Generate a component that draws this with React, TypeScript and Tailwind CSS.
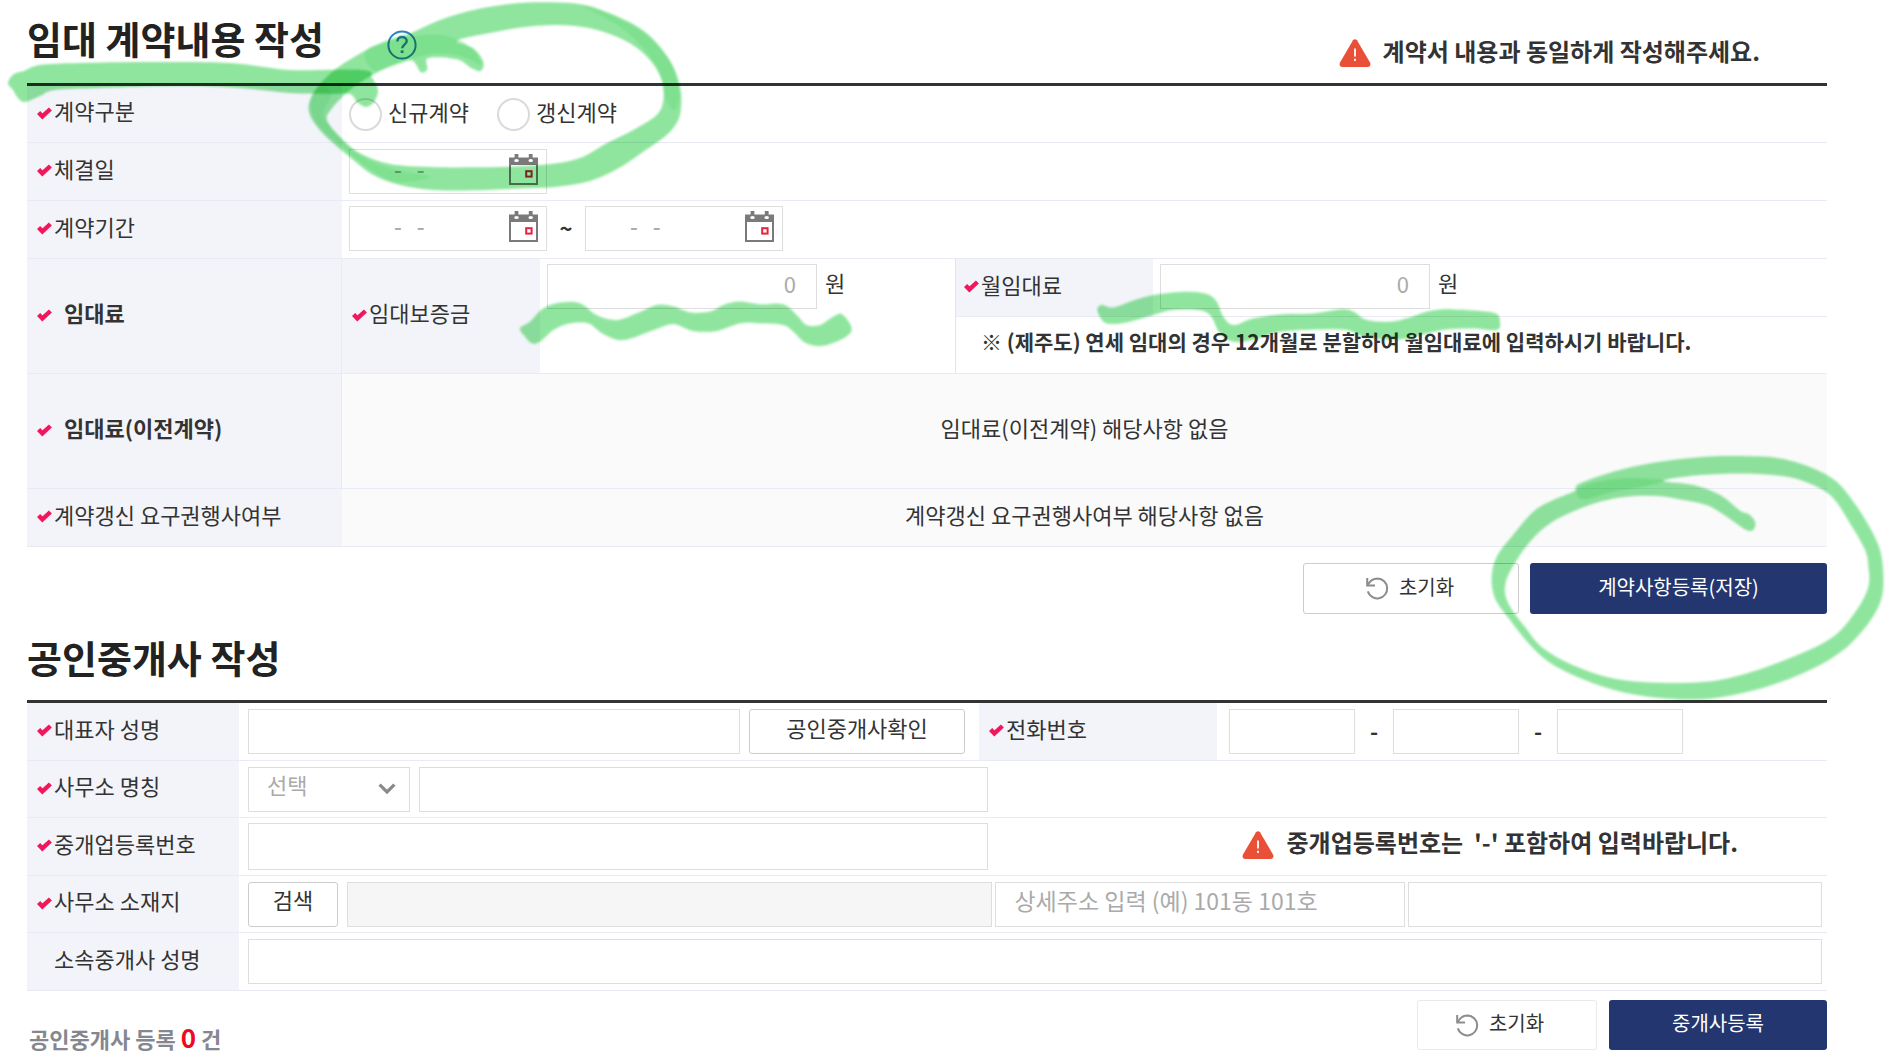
import React from "react";

type Point = [number, number];

/* ---------- icons ---------- */

function RequiredMark() {
  return (
    <svg width="15" height="13" viewBox="0 0 15 13" className="mr-0.5 mt-1.5 shrink-0" aria-label="필수">
      <path d="M1.6 5.4 L5.4 9.4 L13.4 2" fill="none" stroke="#f0175c" strokeWidth="4.4" />
    </svg>
  );
}

function CalendarIcon() {
  return (
    <svg width="29" height="31" viewBox="0 0 29 31" aria-hidden="true">
      <path d="M0 3.5H29V31H0Z" fill="#7a7a7a" />
      <path d="M5.6 0H9.4V5H5.6ZM19.8 0H23.6V5H19.8Z" fill="#7a7a7a" />
      <path d="M2 11H27V29H2Z" fill="#fff" />
      <ellipse cx="7.5" cy="6.6" rx="2.3" ry="1.5" fill="#fff" />
      <ellipse cx="21.7" cy="6.6" rx="2.3" ry="1.5" fill="#fff" />
      <rect x="17.2" y="17.2" width="5.4" height="5.4" fill="none" stroke="#e8223c" strokeWidth="2" />
    </svg>
  );
}

function ResetIcon() {
  return (
    <svg width="23" height="23" viewBox="0 0 23 23" fill="none" stroke="#8c8c8c" strokeWidth="2" aria-hidden="true">
      <path d="M1.2 1V8.6H9" />
      <path d="M1.6 8.4C4 3.6 7.4 1.6 11.6 1.6A9.9 9.9 0 1 1 1.8 14.4" />
    </svg>
  );
}

function WarningIcon() {
  return (
    <svg width="32" height="28" viewBox="0 0 32 28" className="shrink-0" aria-hidden="true">
      <path
        d="M14 1.3Q16-1 18 1.3L31 23.5Q32.4 27.6 29 28H3Q-.4 27.6 1 23.5Z"
        fill="#ea5038"
      />
      <path d="M16 9.6V17.6M16 19.8V22" stroke="#fff" strokeWidth="1.8" />
    </svg>
  );
}

function HelpIcon() {
  return (
    <svg width="30" height="30" viewBox="0 0 30 30" fill="none" stroke="#2b83c6" aria-hidden="true">
      <circle cx="15" cy="15" r="13.6" strokeWidth="2" />
      <path d="M10.4 11.4C10.4 8.6 12.4 7 15 7s4.7 1.6 4.7 4.2c0 3.2-4.5 3.6-4.5 7" strokeWidth="2.4" />
      <path d="M13.7 20.4h2.8v2.6h-2.8z" fill="#2b83c6" stroke="none" />
    </svg>
  );
}

/* ---------- highlighter strokes ---------- */

function smooth(points: Point[]): string {
  const n = points.length;
  let d = `M${points[0][0]} ${points[0][1]}`;
  for (let i = 0; i < n; i++) {
    const a = points[(i - 1 + n) % n];
    const b = points[i];
    const c = points[(i + 1) % n];
    const e = points[(i + 2) % n];
    d += `C${b[0] + (c[0] - a[0]) / 6} ${b[1] + (c[1] - a[1]) / 6} ${c[0] - (e[0] - b[0]) / 6} ${c[1] - (e[1] - b[1]) / 6} ${c[0]} ${c[1]}`;
  }
  return d + "Z";
}

const underline: Point[] = [
  [8, 83], [14, 74], [24, 71], [40, 65], [80, 63], [150, 62], [230, 63], [290, 70], [363, 70], [372, 78], [378, 90],
  [374, 102], [366, 107], [357, 102], [350, 94], [330, 94], [290, 93], [240, 88], [180, 86], [100, 88], [55, 90],
  [40, 96], [25, 102], [18, 98], [13, 90],
];

const ringOneOuter: Point[] = [
  [220, 155], [290, 122], [365, 98], [450, 60], [560, 28], [680, 10], [780, 7], [880, 14], [960, 40], [1050, 85],
  [1110, 140], [1150, 200], [1170, 260], [1174, 310], [1165, 360], [1130, 405], [1060, 455], [980, 508], [900, 543],
  [800, 560], [700, 565], [560, 571], [430, 570], [330, 555], [250, 525], [190, 480], [130, 430], [85, 385],
  [58, 340], [60, 300], [85, 257], [140, 205],
];

const ringOneInner: Point[] = [
  [1120, 300], [1115, 240], [1080, 180], [1020, 130], [940, 95], [850, 77], [740, 77], [620, 95], [500, 122],
  [550, 145], [580, 185], [572, 213], [545, 205], [500, 178], [415, 174], [412, 208], [393, 217], [368, 182],
  [330, 190], [260, 218], [180, 270], [122, 330], [112, 362], [150, 410], [210, 460], [300, 492], [420, 501],
  [560, 502], [700, 498], [800, 490], [880, 470], [950, 430], [1030, 390], [1100, 345],
];

const ringOneShade: Point[] = [
  [225, 155], [300, 122], [400, 105], [470, 108], [540, 140], [575, 195], [520, 170], [440, 160], [330, 185], [255, 212],
];

const ringOneRight: Point[] = [
  [880, 18], [960, 45], [1050, 90], [1110, 145], [1150, 205], [1168, 290], [1150, 330], [1125, 290], [1110, 220],
  [1060, 145], [990, 80],
];

const ringOneLeft: Point[] = [
  [90, 260], [62, 310], [85, 375], [150, 435], [230, 500], [320, 545], [420, 530], [300, 505], [200, 460], [120, 380],
  [100, 340], [125, 280],
];

const ringTwoOuter: Point[] = [
  [287, 145], [300, 130], [400, 95], [520, 68], [650, 52], [780, 48], [900, 55], [1000, 85], [1070, 125], [1120, 185],
  [1165, 255], [1200, 330], [1210, 410], [1203, 480], [1165, 550], [1090, 630], [990, 690], [860, 740], [720, 772],
  [600, 778], [470, 765], [340, 730], [220, 675], [150, 615], [90, 540], [45, 475], [35, 410], [50, 350], [95, 290],
  [160, 215], [220, 180], [280, 155],
];

const ringTwoInner: Point[] = [
  [1165, 380], [1155, 330], [1110, 250], [1050, 165], [960, 120], [880, 105], [780, 100], [660, 105], [550, 122],
  [640, 135], [720, 165], [780, 212], [805, 222], [825, 245], [820, 270], [795, 268], [740, 230], [680, 195],
  [600, 178], [530, 168], [440, 170], [360, 185], [290, 210], [210, 250], [150, 305], [95, 385], [75, 440],
  [85, 490], [130, 555], [190, 625], [290, 680], [400, 715], [530, 728], [680, 725], [800, 700], [940, 650],
  [1060, 590], [1130, 510], [1165, 440],
];

const ringTwoShade: Point[] = [
  [292, 150], [340, 128], [430, 115], [550, 120], [500, 138], [400, 155], [310, 178],
];

const waveLeft: Point[] = [
  [30, 145], [60, 125], [100, 85], [150, 68], [210, 70], [260, 105], [320, 120], [380, 100], [440, 75], [490, 79],
  [540, 97], [600, 95], [640, 75], [690, 65], [750, 73], [820, 73], [860, 105], [890, 135], [930, 135], [970, 110],
  [995, 102], [1022, 135], [1020, 160], [980, 185], [930, 198], [885, 188], [850, 155], [820, 135], [750, 130],
  [690, 130], [620, 153], [550, 153], [490, 132], [430, 150], [340, 180], [280, 162], [235, 130], [180, 130],
  [130, 150], [90, 185], [65, 190], [45, 170],
];

const waveRight: Point[] = [
  [52, 90], [65, 75], [100, 82], [170, 58], [240, 42], [320, 35], [380, 42], [410, 65], [430, 110], [460, 135],
  [520, 115], [600, 103], [700, 100], [780, 88], [820, 95], [860, 120], [930, 125], [990, 112], [1050, 93],
  [1120, 88], [1240, 98], [1260, 125], [1250, 150], [1180, 145], [1100, 148], [1040, 160], [960, 178], [860, 172],
  [800, 150], [720, 148], [600, 155], [520, 180], [460, 185], [420, 160], [390, 105], [350, 90], [280, 90],
  [220, 105], [150, 125], [100, 132], [70, 125],
];

function Highlighter() {
  return (
    <svg
      viewBox="0 0 1894 1064"
      className="pointer-events-none absolute left-0 top-0 w-full mix-blend-multiply"
      fill="#8fe59e"
      fillRule="evenodd"
      aria-hidden="true"
    >
      <defs>
        <filter id="soft-edge" x="-5%" y="-20%" width="110%" height="140%">
          <feGaussianBlur stdDeviation="1" />
        </filter>
      </defs>
      <g filter="url(#soft-edge)">
        <path d={smooth(underline)} />
        <g transform="translate(290 0) scale(0.33333)" className="mix-blend-multiply">
          <path d={smooth(ringOneOuter) + smooth(ringOneInner)} />
          <path d={smooth(ringOneShade)} fill="#6fdc82" opacity="0.55" />
          <path d={smooth(ringOneRight)} fill="#6fdc82" opacity="0.5" />
          <path d={smooth(ringOneLeft)} fill="#6fdc82" opacity="0.5" />
        </g>
        <g transform="translate(1480 440) scale(0.33333)">
          <path d={smooth(ringTwoOuter) + smooth(ringTwoInner)} />
          <path d={smooth(ringTwoShade)} fill="#6fdc82" opacity="0.8" />
        </g>
        <path transform="translate(510 280) scale(0.33333)" d={smooth(waveLeft)} />
        <path transform="translate(1080 280) scale(0.33333)" d={smooth(waveRight)} />
      </g>
    </svg>
  );
}

/* ---------- form pieces ---------- */

const box = "border border-[#dedede] bg-white pb-2 placeholder:text-[#aaa] outline-none";

function HeadCell({
  label,
  htmlFor,
  className,
  required = true,
  bold = false,
}: {
  label: string;
  htmlFor?: string;
  className: string;
  required?: boolean;
  bold?: boolean;
}) {
  return (
    <div className={`flex shrink-0 items-center bg-[#f3f4f9] pb-2 ${className}`}>
      {required ? <RequiredMark /> : <span className="w-[17px]" />}
      <label htmlFor={htmlFor} className={bold ? "ml-2.5 font-bold" : ""}>
        {label}
      </label>
    </div>
  );
}

function DateField({ id, label }: { id: string; label: string }) {
  return (
    <div className="relative">
      <input id={id} aria-label={label} placeholder="-   -" className={`${box} block h-[45px] w-[198px] pl-11 placeholder:font-medium`} />
      <button type="button" aria-label={`${label} 달력`} className="absolute right-[9px] top-[5px]">
        <CalendarIcon />
      </button>
    </div>
  );
}

function RadioField({ label, id }: { label: string; id: string }) {
  return (
    <div className="flex items-center gap-1.5">
      <input
        id={id}
        type="radio"
        name="contractType"
        className="size-[33px] appearance-none rounded-full border-2 border-[#dadada] bg-white"
      />
      <label htmlFor={id} className="pb-1.5">
        {label}
      </label>
    </div>
  );
}

function AmountField({ id }: { id: string }) {
  return (
    <div className="flex items-center gap-2">
      <input id={id} placeholder="0" className={`${box} h-[45px] w-[270px] pr-5 text-right`} />
      <span className="pb-2.5">원</span>
    </div>
  );
}

const line = "border-b border-[#e9eaf3]";

export default function App() {
  return (
    <main className="relative bg-white pb-3 pl-[27px] pr-[67px] font-['Noto_Sans_CJK_KR',sans-serif] text-[22px] leading-[32px] text-[#333]">
      <section>
        <header className="flex h-[83px] items-center">
          <h1 className="pb-2 text-[38px] font-bold text-[#222]">임대 계약내용 작성</h1>
          <button type="button" aria-label="도움말" className="ml-[63px] mt-1.5">
            <HelpIcon />
          </button>
          <p className="ml-auto mr-[67px] mt-[22px] flex items-center gap-3 text-2xl font-bold">
            <WarningIcon />
            <span className="pb-1">계약서 내용과 동일하게 작성해주세요.</span>
          </p>
        </header>

        <div className="border-t-[3px] border-[#333]">
          <div className={`flex h-[57px] ${line}`}>
            <HeadCell label="계약구분" className="w-[315px] pl-2.5" />
            <div className="flex items-center gap-7 pl-[7px]">
              <RadioField id="type-new" label="신규계약" />
              <RadioField id="type-renew" label="갱신계약" />
            </div>
          </div>

          <div className={`flex h-[58px] ${line}`}>
            <HeadCell label="체결일" htmlFor="sign-date" className="w-[315px] pl-2.5" />
            <div className="flex items-center pl-[7px]">
              <DateField id="sign-date" label="체결일" />
            </div>
          </div>

          <div className={`flex h-[58px] ${line}`}>
            <HeadCell label="계약기간" htmlFor="start-date" className="w-[315px] pl-2.5" />
            <div className="flex items-center pb-0.5 pl-[7px]">
              <DateField id="start-date" label="계약 시작일" />
              <span className="w-[38px] pb-1 text-center font-bold">~</span>
              <DateField id="end-date" label="계약 종료일" />
            </div>
          </div>

          <div className={`grid h-[115px] grid-cols-[315px_198px_minmax(0,415fr)_minmax(0,872fr)] ${line}`}>
            <HeadCell label="임대료" bold className="border-r border-[#e9eaf3] pl-2.5" />
            <HeadCell label="임대보증금" htmlFor="deposit" className="pl-2.5" />
            <div className="pl-[7px] pt-[5px]">
              <AmountField id="deposit" />
            </div>
            <div className="flex flex-col border-l border-[#e4e5ec]">
              <div className={`flex h-[58px] ${line}`}>
                <HeadCell label="월임대료" htmlFor="rent" className="w-[197px] pl-2" />
                <div className="pl-[7px] pt-[5px]">
                  <AmountField id="rent" />
                </div>
              </div>
              <p className="flex flex-1 items-center whitespace-nowrap pb-2 pl-[25px] text-[21px] font-bold">
                ※ (제주도) 연세 임대의 경우 12개월로 분할하여 월임대료에 입력하시기 바랍니다.
              </p>
            </div>
          </div>

          <div className={`flex h-[115px] ${line}`}>
            <HeadCell label="임대료(이전계약)" bold className="w-[315px] border-r border-[#e9eaf3] pl-2.5" />
            <div className="flex flex-1 items-center justify-center bg-[#fafafa] pb-2">임대료(이전계약) 해당사항 없음</div>
          </div>

          <div className={`flex h-[58px] ${line}`}>
            <HeadCell label="계약갱신 요구권행사여부" className="w-[315px] pl-2.5" />
            <div className="flex flex-1 items-center justify-center bg-[#fafafa] pb-2">
              계약갱신 요구권행사여부 해당사항 없음
            </div>
          </div>
        </div>

        <div className="mt-4 flex justify-end gap-[11px] text-xl">
          <button
            type="button"
            className="flex h-[51px] w-[216px] items-center justify-center gap-2.5 rounded-[3px] border border-[#ccc] bg-white pr-0.5"
          >
            <ResetIcon />
            <span className="pb-1">초기화</span>
          </button>
          <button type="button" className="h-[51px] w-[297px] rounded-[3px] bg-[#23366f] pb-1 text-white">
            계약사항등록(저장)
          </button>
        </div>
      </section>

      <section>
        <header className="flex h-[86px] items-center">
          <h2 className="text-[38px] font-bold text-[#222]">공인중개사 작성</h2>
        </header>

        <div className="border-t-[3px] border-[#333]">
          <div className={`grid h-[58px] grid-cols-[212px_minmax(0,740fr)_minmax(0,848fr)] ${line}`}>
            <HeadCell label="대표자 성명" htmlFor="agent-name" className="pl-2.5" />
            <div className="flex items-center gap-[9px] pl-[9px] pr-3.5">
              <input id="agent-name" className={`${box} h-[45px] min-w-0 flex-1`} />
              <button type="button" className="h-[45px] w-[216px] rounded-[3px] border border-[#ccc] bg-white pb-2.5">
                공인중개사확인
              </button>
            </div>
            <div className="flex">
              <HeadCell label="전화번호" htmlFor="tel-1" className="w-[238px] pl-2.5" />
              <div className="flex items-center pl-3">
                <input id="tel-1" className={`${box} h-[45px] w-[126px]`} />
                <span className="w-[38px] pb-1 text-center font-bold">-</span>
                <input aria-label="전화번호 가운데 자리" className={`${box} h-[45px] w-[126px]`} />
                <span className="w-[38px] pb-1 text-center font-bold">-</span>
                <input aria-label="전화번호 끝자리" className={`${box} h-[45px] w-[126px]`} />
              </div>
            </div>
          </div>

          <div className={`grid h-[57px] grid-cols-[212px_minmax(0,749fr)_minmax(0,839fr)] ${line}`}>
            <HeadCell label="사무소 명칭" htmlFor="office-name" className="pl-2.5" />
            <div className="flex items-center gap-[9px] pl-[9px]">
              <div className="relative">
                <select
                  aria-label="사무소 구분"
                  className="block h-[45px] w-[162px] appearance-none border border-[#dedede] bg-white pb-2.5 pl-[18px] text-[#aaa] outline-none"
                >
                  <option>선택</option>
                </select>
                <svg
                  width="18"
                  height="12"
                  viewBox="0 0 18 12"
                  className="pointer-events-none absolute right-3.5 top-4"
                  aria-hidden="true"
                >
                  <path d="M1.6 1.6L9 9L16.4 1.6" fill="none" stroke="#8a8a8a" strokeWidth="3.2" />
                </svg>
              </div>
              <input id="office-name" className={`${box} h-[45px] min-w-0 flex-1`} />
            </div>
          </div>

          <div className={`grid h-[58px] grid-cols-[212px_minmax(0,749fr)_minmax(0,839fr)] ${line}`}>
            <HeadCell label="중개업등록번호" htmlFor="license" className="pl-2.5" />
            <div className="flex items-center pl-[9px]">
              <input id="license" className={`${box} h-[47px] min-w-0 flex-1`} />
            </div>
            <div className="flex items-center justify-end pb-1 pr-[89px]">
              <p className="flex items-center gap-3 whitespace-pre text-2xl font-bold">
                <WarningIcon />
                <span className="pb-1.5">중개업등록번호는  '-' 포함하여 입력바랍니다.</span>
              </p>
            </div>
          </div>

          <div className={`flex h-[57px] ${line}`}>
            <HeadCell label="사무소 소재지" htmlFor="address" className="w-[212px] pl-2.5" />
            <div className="flex flex-1 items-center pl-[9px] pr-[5px]">
              <button type="button" className="mr-[9px] h-[45px] w-[90px] rounded-[3px] border border-[#ccc] bg-white pb-2.5">
                검색
              </button>
              <div className="grid flex-1 grid-cols-[minmax(0,645fr)_minmax(0,409fr)_minmax(0,414fr)] gap-[3px]">
                <input
                  id="address"
                  readOnly
                  className="h-[45px] border border-[#dedede] bg-[#f6f6f6] outline-none"
                />
                <input
                  aria-label="상세주소"
                  placeholder="상세주소 입력 (예) 101동 101호"
                  className={`${box} h-[45px] pl-[18px] text-[23px]`}
                />
                <input aria-label="참고항목" className={`${box} h-[45px]`} />
              </div>
            </div>
          </div>

          <div className={`flex h-[58px] ${line}`}>
            <HeadCell label="소속중개사 성명" htmlFor="staff" required={false} className="w-[212px] pl-2.5" />
            <div className="flex flex-1 items-center pl-[9px] pr-[5px]">
              <input id="staff" className={`${box} h-[45px] min-w-0 flex-1`} />
            </div>
          </div>
        </div>

        <footer className="mt-[9px] flex items-end justify-between">
          <p className="-mb-1 pl-0.5 font-bold text-[#84878f]">
            공인중개사 등록 <span className="text-[26px] text-[#ee0a24]">0</span> 건
          </p>
          <div className="flex gap-3 text-xl">
            <button
              type="button"
              className="flex h-[50px] w-[180px] items-center justify-center gap-2.5 rounded-[3px] border border-[#e9eaf0] bg-white pr-3.5"
            >
              <ResetIcon />
              <span className="pb-1">초기화</span>
            </button>
            <button type="button" className="h-[50px] w-[218px] rounded-[3px] bg-[#23366f] pb-1 text-white">
              중개사등록
            </button>
          </div>
        </footer>
      </section>

      <Highlighter />
    </main>
  );
}
